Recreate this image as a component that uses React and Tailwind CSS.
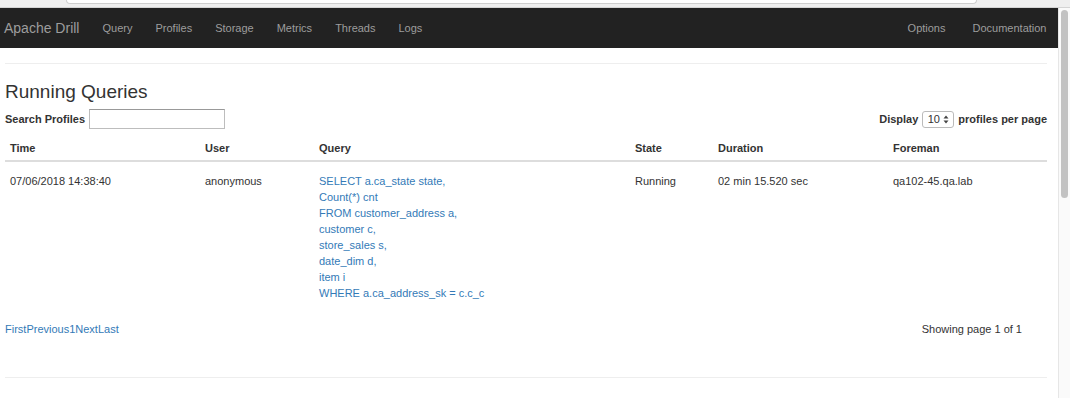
import React from "react"

const navLinks = ["Query", "Profiles", "Storage", "Metrics", "Threads", "Logs"]

const queryLines = [
  "SELECT a.ca_state state,",
  "Count(*) cnt",
  "FROM customer_address a,",
  "customer c,",
  "store_sales s,",
  "date_dim d,",
  "item i",
  "WHERE a.ca_address_sk = c.c_c"
]

const cols = "grid grid-cols-[195px_114px_316px_83px_175px_1fr]"

export default function App() {
  return (
    <div className="w-[1070px] h-[398px] overflow-hidden bg-white flex flex-col font-['Liberation_Sans',Arial,sans-serif] text-[#333] text-[11px]">

      {/* browser toolbar edge */}
      <div className="h-[8px] bg-[#efefef] border-b border-[#d4d4d4] shrink-0">
        <div className="ml-[66px] w-[911px] h-[4px] bg-white border border-t-0 border-[#cfcfcf] rounded-b-[4px]" />
      </div>

      <div className="flex flex-1 min-h-0">
        <div className="w-[1058px] flex flex-col">

          {/* Navbar */}
          <nav className="h-[40px] bg-[#222] flex items-center pl-[4px] text-[#9d9d9d]">
            <div className="text-[14px] pr-[11.5px]">Apache Drill</div>
            {navLinks.map(l => (
              <div key={l} className="px-[11.5px]">{l}</div>
            ))}
            <div className="ml-auto flex">
              <div className="px-[11.5px] mr-[4px]">Options</div>
              <div className="px-[11.5px]">Documentation</div>
            </div>
          </nav>

          {/* Content */}
          <div className="pl-[5px] pr-[11px]">
            <div className="mt-[15px] border-t border-[#eee]" />

            <h3 className="mt-[17px] text-[19px] leading-[22px]">Running Queries</h3>

            <div className="mt-[6px] h-[20px] flex items-center">
              <label className="font-bold">Search Profiles</label>
              <input className="ml-[4px] w-[136px] h-[20px] border border-[#bdbdbd] border-t-[#999] outline-none" />
              <div className="ml-auto flex items-center font-bold">
                <span>Display</span>
                <div className="mx-[4px] w-[32px] h-[17px] border border-[#bbb] rounded-[3px] flex items-center justify-center gap-[3px] font-normal">
                  <span>10</span>
                  <svg width="6" height="9" viewBox="0 0 6 9">
                    <path d="M3 0.5 L5.5 3.5 L0.5 3.5 Z" fill="#444" />
                    <path d="M3 8.5 L5.5 5.5 L0.5 5.5 Z" fill="#444" />
                  </svg>
                </div>
                <span>profiles per page</span>
              </div>
            </div>

            {/* Table header */}
            <div className={`${cols} mt-[8px] h-[25px] items-center font-bold border-b-2 border-[#ddd]`}>
              {["Time", "User", "Query", "State", "Duration", "Foreman"].map(h => (
                <div key={h} className="pl-[5px]">{h}</div>
              ))}
            </div>

            {/* Table row */}
            <div className={`${cols} pt-[11px] leading-[16px]`}>
              <div className="pl-[5px]">07/06/2018 14:38:40</div>
              <div className="pl-[5px]">anonymous</div>
              <div className="pl-[5px] text-[#337ab7]">
                {queryLines.map(q => (
                  <div key={q}>{q}</div>
                ))}
              </div>
              <div className="pl-[5px]">Running</div>
              <div className="pl-[5px]">02 min 15.520 sec</div>
              <div className="pl-[5px]">qa102-45.qa.lab</div>
            </div>

            {/* Pagination */}
            <div className="mt-[20px] flex items-center leading-[16px]">
              <div className="text-[#337ab7]">
                <span>First</span><span>Previous</span><span>1</span><span>Next</span><span>Last</span>
              </div>
              <div className="ml-auto pr-[25px]">Showing page 1 of 1</div>
            </div>

            <div className="mt-[40px] border-t border-[#eee]" />
          </div>
        </div>

        {/* Scrollbar */}
        <div className="w-[12px] bg-[#fafafa] border-l border-[#e6e6e6] pt-[2px] flex justify-center">
          <div className="w-[7px] h-[188px] bg-[#c2c2c2] rounded-full" />
        </div>
      </div>
    </div>
  )
}
